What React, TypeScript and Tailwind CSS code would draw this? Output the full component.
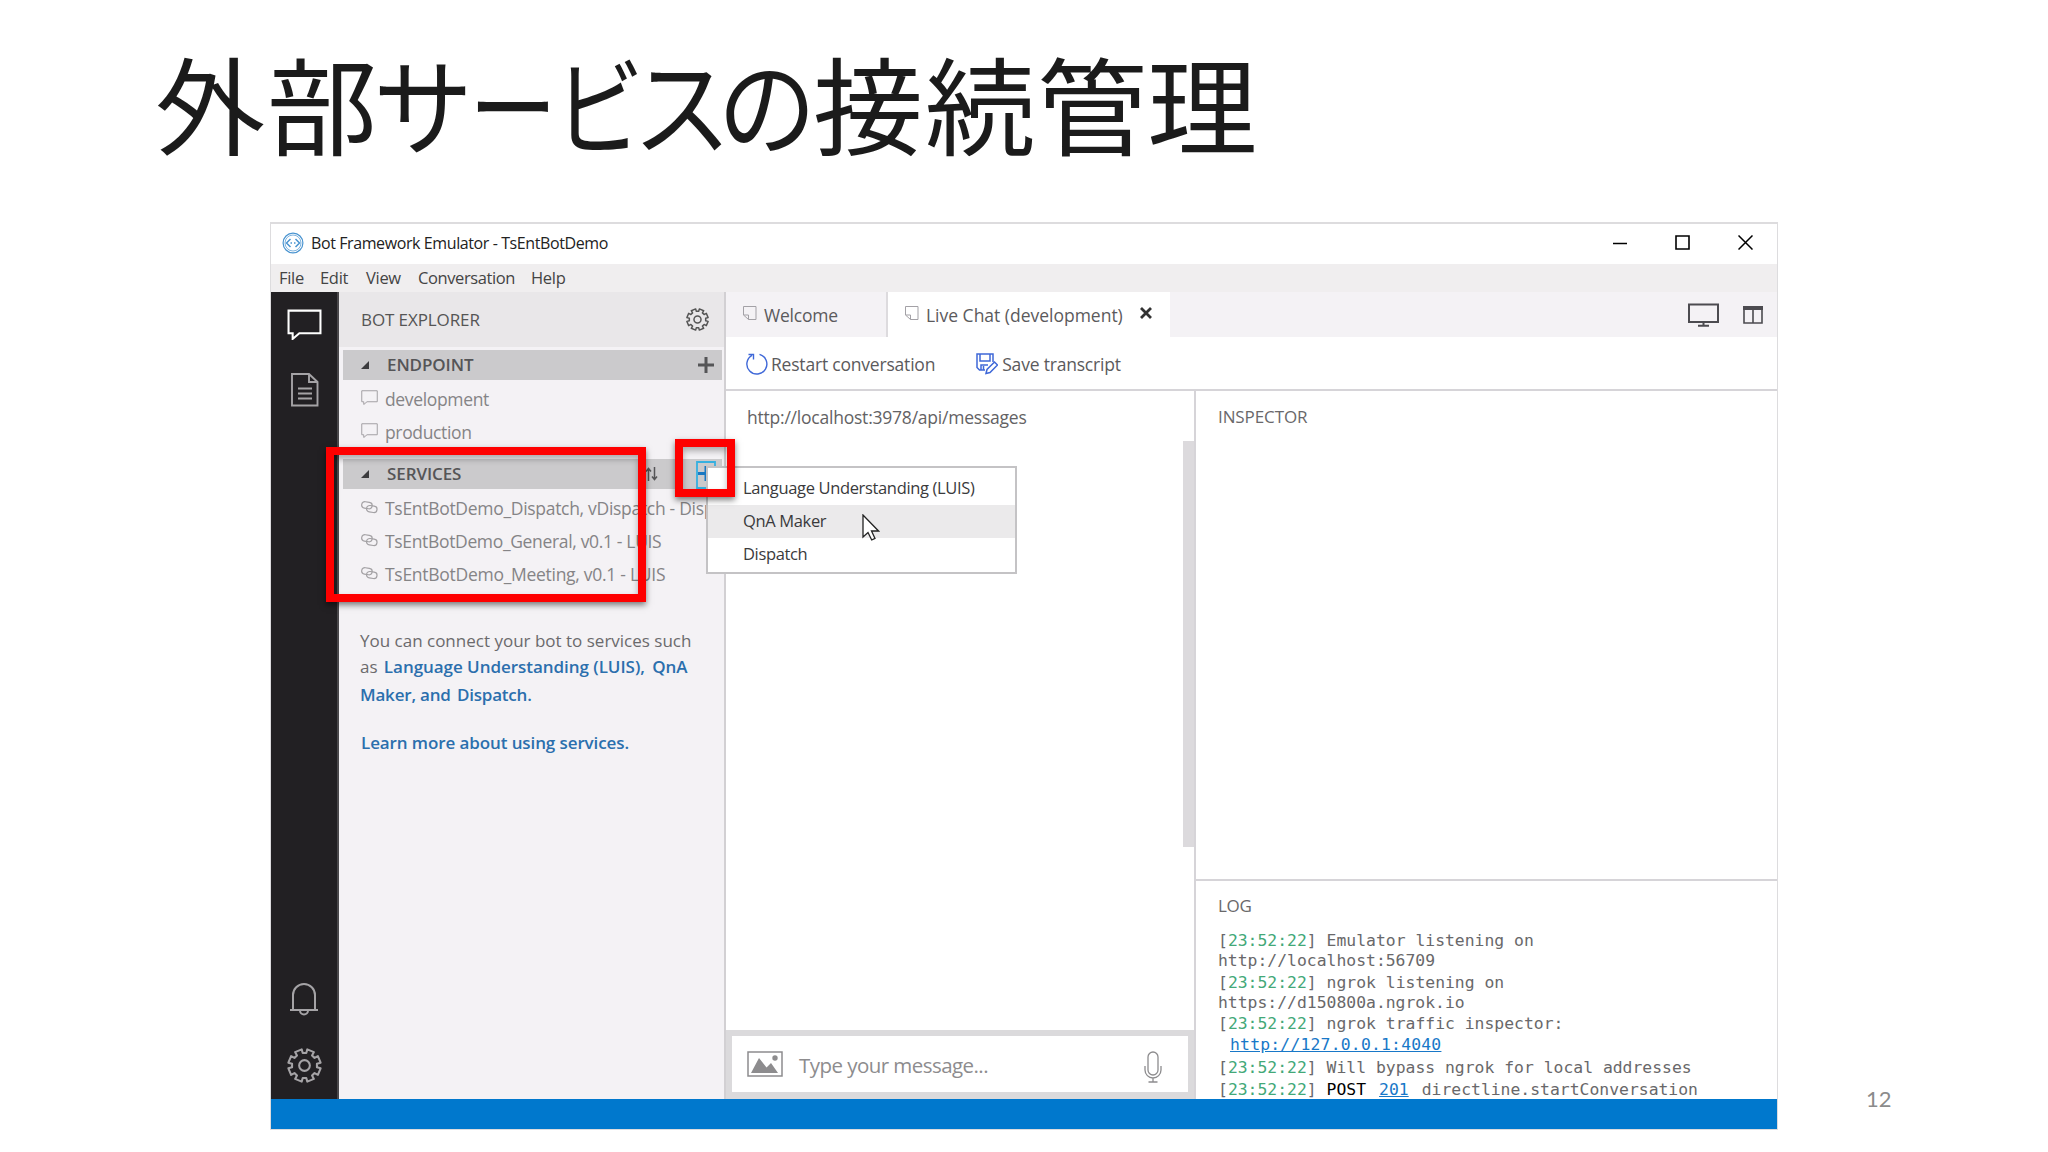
import type { ReactNode, SVGProps } from 'react';

// ---------------------------------------------------------------------------
// Icons
// ---------------------------------------------------------------------------

function Icon({ children, ...props }: SVGProps<SVGSVGElement>) {
  return (
    <svg fill="none" stroke="currentColor" {...props}>
      {children}
    </svg>
  );
}

function GearIcon({ className, strokeWidth = 2 }: { className?: string; strokeWidth?: number }) {
  // 8 teeth around a ring, with a small hub
  const points: string[] = [];
  for (let i = 0; i < 8; i++) {
    const base = (i * 45 - 90) * (Math.PI / 180);
    const corners: [number, number][] = [
      [-0.25, 12.2],
      [-0.22, 15.9],
      [0.22, 15.9],
      [0.25, 12.2],
    ];
    corners.forEach(([offset, radius]) => {
      const a = base + offset + Math.PI / 8;
      points.push(`${(17 + radius * Math.cos(a)).toFixed(2)},${(17 + radius * Math.sin(a)).toFixed(2)}`);
    });
  }
  return (
    <Icon viewBox="0 0 34 34" className={className} strokeWidth={strokeWidth} strokeLinejoin="round">
      <polygon points={points.join(' ')} />
      <circle cx="17" cy="17" r="5.2" />
    </Icon>
  );
}

function BubbleIcon({ className, strokeWidth }: { className?: string; strokeWidth: number }) {
  return (
    <Icon viewBox="0 0 34 30" className={className} strokeWidth={strokeWidth}>
      <path d="M1.5 1.5h31v22H12l-6.500 5.500v-5.500h-4z" />
    </Icon>
  );
}

function LinkIcon() {
  return (
    <Icon viewBox="0 0 17 13" className="mb-[3px] h-[13px] w-[17px] shrink-0 text-[#a3a1a4]" strokeWidth="1.200">
      <rect x="0.700" y="1" width="10.500" height="6.500" rx="3.200" transform="rotate(8 6 4)" />
      <rect x="5.500" y="4.800" width="10.500" height="6.500" rx="3.200" transform="rotate(8 11 8)" />
    </Icon>
  );
}

function NoteIcon() {
  return (
    <Icon viewBox="0 0 14 15" className="mb-[3px] h-[15px] w-[14px] shrink-0 text-[#a3a1a6]" strokeWidth="1">
      <path d="M.5.500h12.500v13H5.500l-5-4.500zM.500 9h5v4.500" />
    </Icon>
  );
}

// ---------------------------------------------------------------------------
// Slide title: the kana are set narrower than the kanji
// ---------------------------------------------------------------------------

const TITLE: { char: string; cell: string; glyph: string }[] = [
  { char: '外', cell: 'w-[113px]', glyph: 'scale-x-[1.04]' },
  { char: '部', cell: 'w-[112px]', glyph: 'scale-x-[1.04]' },
  { char: 'サ', cell: 'w-[90px]', glyph: 'scale-x-[0.94]' },
  { char: 'ー', cell: 'w-[89px]', glyph: 'scale-x-[0.83]' },
  { char: 'ビ', cell: 'w-[84px]', glyph: 'scale-x-[0.85]' },
  { char: 'ス', cell: 'w-[81px]', glyph: 'scale-x-[0.93]' },
  { char: 'の', cell: 'w-[90px]', glyph: 'scale-x-[0.93]' },
  { char: '接', cell: 'w-[112px]', glyph: 'scale-x-[1.04]' },
  { char: '続', cell: 'w-[112px]', glyph: 'scale-x-[1.04]' },
  { char: '管', cell: 'w-[111px]', glyph: 'scale-x-[1.04]' },
  { char: '理', cell: 'w-[109px]', glyph: 'scale-x-[1.04]' },
];

function SlideTitle() {
  return (
    <h1 className="flex h-[222px] pt-[46px] pl-[153px] font-['Noto_Sans_CJK_JP',sans-serif] text-[106px] leading-[110px] text-[#1b1b1b]">
      {TITLE.map(({ char, cell, glyph }) => (
        <span key={char} className={`flex justify-center ${cell}`}>
          <span className={`inline-block ${glyph}`}>{char}</span>
        </span>
      ))}
    </h1>
  );
}

// ---------------------------------------------------------------------------
// Window chrome
// ---------------------------------------------------------------------------

function TitleBar() {
  return (
    <div className="flex h-[40px] items-center bg-white pb-[3px] pl-[11px] text-black">
      <Icon viewBox="0 0 22 22" className="h-[22px] w-[22px] text-[#4a94d0]" strokeWidth="1.2">
        <circle cx="11" cy="11" r="9.900" />
        <circle cx="11" cy="11" r="8" strokeWidth=".7" />
        <path d="M8.500 7 4.500 11l4 4M13.500 7l4 4-4 4" strokeWidth="1.500" />
        <path d="M8.500 11h1.500M12 11h1.500" strokeWidth="1.500" />
      </Icon>
      <span className="ml-[7px] text-[16px] tracking-[-0.4px] text-[#222]">Bot Framework Emulator - TsEntBotDemo</span>
      <div className="mr-[24px] ml-auto flex items-center gap-[48px]">
        <Icon viewBox="0 0 14 14" className="h-[14px] w-[14px]" strokeWidth="1.500">
          <path d="M0 7.500h14" />
        </Icon>
        <Icon viewBox="0 0 15 15" className="h-[15px] w-[15px]" strokeWidth="1.600">
          <path d="M1 1h13v13H1z" />
        </Icon>
        <Icon viewBox="0 0 15 15" className="h-[15px] w-[15px]" strokeWidth="1.500">
          <path d="m.500.500 14 14M14.500.500l-14 14" />
        </Icon>
      </div>
    </div>
  );
}

function MenuBar() {
  return (
    <div className="flex h-[28px] items-center bg-[#f0eeef] pl-[8px] text-[16.5px] tracking-[-0.3px] text-[#444]">
      <span className="w-[41px]">File</span>
      <span className="w-[46px]">Edit</span>
      <span className="w-[52px]">View</span>
      <span className="w-[113px] tracking-[-0.4px]">Conversation</span>
      <span>Help</span>
    </div>
  );
}

function ActivityBar() {
  return (
    <nav className="flex w-[68px] shrink-0 flex-col items-center border-r-2 border-[#4a484b] bg-[#222023] pt-[17px] pb-[16px] text-[#a5a3a6]">
      <BubbleIcon className="h-[31px] w-[35px] text-white" strokeWidth={2} />
      <Icon viewBox="0 0 28 34" className="mt-[33px] ml-[2px] h-[34px] w-[28px]" strokeWidth="1.900">
        <path d="M1 1h17l8.500 8v23.500H1zM18 1v8h8.500" />
        <path d="M7 15.500h14M7 20.500h14M7 25.500h14" />
      </Icon>
      <Icon viewBox="0 0 30 34" className="mt-auto h-[34px] w-[30px]" strokeWidth="2">
        <path d="M1 28h28M4 28V13a11 11 0 0 1 22 0v15M11 28.500a4 4 0 0 0 8 0" />
      </Icon>
      <GearIcon className="mt-[32px] h-[35px] w-[35px]" />
    </nav>
  );
}

// ---------------------------------------------------------------------------
// Bot explorer
// ---------------------------------------------------------------------------

function SectionHeader({ title, children }: { title: string; children?: ReactNode }) {
  return (
    <div className="mr-[2px] ml-[4px] flex h-[30px] items-center bg-[#cbcacc] pl-[18px] text-[#555557]">
      <svg viewBox="0 0 8 8" className="h-[8px] w-[8px] fill-[#3c3c3e]">
        <path d="M8 0v8H0z" />
      </svg>
      <span className="ml-[18px] text-[17px] font-semibold tracking-[-0.1px]">{title}</span>
      {children}
    </div>
  );
}

const SERVICES = [
  { name: 'TsEntBotDemo_Dispatch, vDispatch - Dispatch', spacing: 'tracking-[-0.3px]' },
  { name: 'TsEntBotDemo_General, v0.1 - LUIS', spacing: 'tracking-[-0.34px]' },
  { name: 'TsEntBotDemo_Meeting, v0.1 - LUIS', spacing: 'tracking-[-0.28px]' },
];

function Explorer() {
  return (
    <aside className="flex w-[387px] shrink-0 flex-col overflow-hidden border-r-2 border-[#d2d0d3] bg-[#f4f2f5] text-[17.5px] text-[#858486]">
      <div className="mb-[3px] flex h-[55px] items-center justify-between bg-[#e9e7e9] pr-[15px] pl-[22px] text-[#555]">
        <span className="text-[17px] tracking-[-0.1px]">BOT EXPLORER</span>
        <GearIcon className="h-[23px] w-[23px]" strokeWidth={2.2} />
      </div>

      <SectionHeader title="ENDPOINT">
        <Icon viewBox="0 0 16 16" className="mr-[8px] ml-auto h-[16px] w-[16px]" strokeWidth="3">
          <path d="M8 0v16M0 8h16" />
        </Icon>
      </SectionHeader>
      <ul className="pt-[3px] pb-[10px]">
        {['development', 'production'].map((name) => (
          <li key={name} className="flex h-[33px] items-center pl-[22px]">
            <BubbleIcon className="mb-[4px] h-[15px] w-[17px] text-[#a3a1a4]" strokeWidth={2} />
            <span className="ml-[7px] tracking-[-0.35px]">{name}</span>
          </li>
        ))}
      </ul>

      <SectionHeader title="SERVICES">
        <Icon viewBox="0 0 13 14" className="mr-[64px] ml-auto h-[14px] w-[13px]" strokeWidth="1.500">
          <path d="M3.500 14V2M1 4.500 3.500 1.500 6 4.500M9.500 0v12M7 9.500l2.500 3 2.500-3" />
        </Icon>
      </SectionHeader>
      <ul className="pt-[3px]">
        {SERVICES.map(({ name, spacing }) => (
          <li key={name} className="flex h-[33px] items-center pl-[22px] whitespace-nowrap">
            <LinkIcon />
            <span className={`ml-[7px] ${spacing}`}>{name}</span>
          </li>
        ))}
      </ul>

      <div className="mt-[36px] pl-[21px] text-[17px] leading-[27px] tracking-[0px] whitespace-nowrap text-[#6b6a6c]">
        <p>You can connect your bot to services such</p>
        <p className="-mt-px mb-px tracking-[-0.04px]">
          as <b className="ml-[2px] font-semibold text-[#2b6fad]">Language Understanding (LUIS),</b>{' '}
          <b className="ml-[3px] font-semibold text-[#2b6fad]">QnA</b>
        </p>
        <p className="font-semibold tracking-[-0.2px] text-[#2b6fad]">
          Maker, and <span className="ml-[2px]">Dispatch.</span>
        </p>
        <p className="mt-[21px] ml-[1px] font-semibold tracking-[-0.1px] text-[#2b6fad]">
          Learn more about using services.
        </p>
      </div>
    </aside>
  );
}

// ---------------------------------------------------------------------------
// Documents area
// ---------------------------------------------------------------------------

function TabBar() {
  return (
    <div className="flex h-[45px] shrink-0 bg-[#f4f2f5] text-[17.5px] tracking-[-0.3px] text-[#5b5a5c]">
      <div className="flex w-[162px] items-center border-r-2 border-[#dddbde] pt-[1px] pl-[17px]">
        <NoteIcon />
        <span className="ml-[7px] tracking-[-0.2px]">Welcome</span>
      </div>
      <div className="flex w-[282px] items-center bg-white pt-[1px] pl-[17px]">
        <NoteIcon />
        <span className="ml-[7px] tracking-[-0.01px]">Live Chat (development)</span>
        <Icon viewBox="0 0 12 12" className="mr-[18px] mb-[4px] ml-auto h-[12px] w-[12px] text-[#333]" strokeWidth="2.800">
          <path d="m1 1 10 10M11 1 1 11" />
        </Icon>
      </div>
      <div className="mr-[14px] ml-auto flex items-center gap-[24px] pt-[1px] text-[#4c4b50]">
        <Icon viewBox="0 0 31 24" className="h-[24px] w-[31px]" strokeWidth="2">
          <path d="M1 1.500h29v17.500H1zM15.500 19v4M10 22.800h11" />
        </Icon>
        <Icon viewBox="0 0 20 18" className="h-[18px] w-[20px]" strokeWidth="1.600">
          <path d="M1 1h18v16H1zM10 3v14" />
          <path d="M0 2h20" strokeWidth="4" />
        </Icon>
      </div>
    </div>
  );
}

function Toolbar() {
  return (
    <div className="flex h-[54px] shrink-0 items-center border-b-2 border-[#d6d4d8] bg-white pt-[2px] pl-[20px] text-[17.5px] text-[#5b5a5c]">
      <Icon viewBox="0 0 22 22" className="h-[22px] w-[22px] text-[#3f68d8]" strokeWidth="1.400">
        <path d="M13.500 1.400A10 10 0 1 1 6 2.300M2.500 1.500H7.500V6.500" />
      </Icon>
      <span className="ml-[3px] tracking-[-0.2px]">Restart conversation</span>
      <Icon viewBox="0 0 22 22" className="ml-[41px] h-[22px] w-[22px] text-[#3f68d8]" strokeWidth="1.500">
        <path d="M9 17H3.500L1 14.500V1h16v8M4 1v7h10V1M5 17v-5h7M7.500 13v4" />
        <path d="m10 20.500 1-4 7.500-7.500 3 3-7.500 7.500z" />
      </Icon>
      <span className="ml-[4px] tracking-[-0.2px]">Save transcript</span>
    </div>
  );
}

function ChatPanel() {
  return (
    <section className="flex w-[470px] shrink-0 flex-col border-r-2 border-[#d6d4d8] bg-white">
      <div className="flex flex-1 justify-between">
        <span className="pt-[13px] pl-[21px] text-[17.5px] leading-[26px] tracking-[-0.22px] text-[#636264]">
          http://localhost:3978/api/messages
        </span>
        <div className="mt-[50px] h-[406px] w-[11px] bg-[#dcdadd]" />
      </div>
      <div className="h-[69px] bg-[#dbdadc] p-[6px]">
        <div className="flex h-[56px] items-center bg-white pr-[26px] pl-[15px] text-[#8d8c8e]">
          <Icon viewBox="0 0 36 26" className="h-[26px] w-[36px]" strokeWidth="1.500">
            <path d="M1 1h34v24H1z" />
            <path d="m4 22 8-15 7.500 9.500 4.500-4.500 7 10z" fill="currentColor" stroke="none" />
            <circle cx="28" cy="7" r="2.700" fill="currentColor" stroke="none" />
          </Icon>
          <span className="ml-[16px] pt-[2px] text-[20.5px] tracking-[-0.55px]">Type your message...</span>
          <Icon viewBox="0 0 18 32" className="mt-[5px] ml-auto h-[32px] w-[18px]" strokeWidth="1.300">
            <rect x="4" y="1" width="10" height="23" rx="5" />
            <path d="M1 15v4a8 8 0 0 0 16 0v-4M9 27v4M4.500 31h9" />
          </Icon>
        </div>
      </div>
    </section>
  );
}

function LogLine({ className = 'leading-[21px]', children }: { className?: string; children: ReactNode }) {
  return (
    <p className={className}>
      [<span className="text-[#43a878]">23:52:22</span>] {children}
    </p>
  );
}

function SidePanel() {
  return (
    <section className="flex flex-1 flex-col overflow-hidden bg-white text-[17px] text-[#69686a]">
      <div className="h-[488px] shrink-0 pt-[13px] pl-[22px] leading-[26px] tracking-[-0.1px]">INSPECTOR</div>
      <div className="min-h-0 flex-1 border-t-2 border-[#d6d4d8] pt-[12px] pl-[22px]">
        <h2 className="leading-[26px] tracking-[-0.3px]">LOG</h2>
        <div className="mt-[11px] font-['DejaVu_Sans_Mono',monospace] text-[16.4px] leading-[20.6px] whitespace-nowrap">
          <LogLine>Emulator listening on</LogLine>
          <p>http://localhost:56709</p>
          <LogLine>ngrok listening on</LogLine>
          <p>https://d150800a.ngrok.io</p>
          <LogLine>ngrok traffic inspector:</LogLine>
          <p className="pl-[12px] leading-[22.4px]">
            <a className="tracking-[0.2px] text-[#1878c8] underline">http://127.0.0.1:4040</a>
          </p>
          <LogLine className="leading-[22px]">Will bypass ngrok for local addresses</LogLine>
          <LogLine className="leading-[22px]">
            <span className="text-black">POST</span>
            <a className="mx-[13px] text-[#1878c8] underline">201</a>directline.startConversation
          </LogLine>
        </div>
      </div>
    </section>
  );
}

// ---------------------------------------------------------------------------
// Overlays
// ---------------------------------------------------------------------------

function ServiceMenu() {
  return (
    <div className="absolute top-[466px] left-[706px] h-[108px] w-[311px] border-2 border-[#c4c3c5] bg-white py-[4px] text-[16.5px] tracking-[-0.35px] text-[#3a3a3c]">
      <div className="flex h-[33px] items-center pl-[35px]">Language Understanding (LUIS)</div>
      <div className="flex h-[33px] items-center bg-[#ebeaeb] pl-[35px]">QnA Maker</div>
      <div className="flex h-[33px] items-center pl-[35px]">Dispatch</div>
      <svg viewBox="0 0 18 27" className="absolute top-[46px] left-[154px] h-[27px] w-[18px] fill-white stroke-[#222]" strokeWidth="1.300">
        <path d="M1 1v22l5-4.500 3.700 7.500 3.300-1.600-3.500-7.400h7z" />
      </svg>
    </div>
  );
}

export default function App() {
  return (
    <main className="relative h-[1152px] w-[2048px] overflow-hidden bg-white font-['Open_Sans','Noto_Sans',sans-serif]">
      <SlideTitle />

      <div className="ml-[270px] flex h-[908px] w-[1508px] flex-col border border-t-2 border-[#dddcde]">
        <TitleBar />
        <MenuBar />
        <div className="flex h-[807px] shrink-0">
          <ActivityBar />
          <Explorer />
          <div className="flex min-h-0 flex-1 flex-col">
            <TabBar />
            <Toolbar />
            <div className="flex min-h-0 flex-1">
              <ChatPanel />
              <SidePanel />
            </div>
          </div>
        </div>
        <footer className="flex-1 bg-[#0078cd]" />
      </div>

      {/* focused "add service" button, partly hidden by its menu */}
      <svg viewBox="0 0 20 28" className="absolute top-[461px] left-[696px] h-[28px] w-[20px]" fill="none">
        <path d="M1 1h18v26H1z" stroke="#36b0e0" strokeWidth="1.800" />
        <path d="M2 12.500h16M10 5v15" stroke="#1a78c2" strokeWidth="3" />
      </svg>
      <ServiceMenu />
      <div className="absolute top-[447px] left-[326px] h-[155px] w-[320px] border-8 border-[#fe0000] shadow-[0_3px_6px_rgba(0,0,0,0.5),inset_0_4px_6px_rgba(0,0,0,0.3)]" />
      <div className="absolute top-[439px] left-[675px] h-[58px] w-[60px] border-8 border-[#fe0000] shadow-[0_3px_6px_rgba(0,0,0,0.5),inset_0_4px_6px_rgba(0,0,0,0.3)]" />

      <span className="absolute top-[1085px] left-[1866px] font-['Lato',sans-serif] text-[22px] leading-[28px] text-[#8b8b8b]">12</span>
    </main>
  );
}
